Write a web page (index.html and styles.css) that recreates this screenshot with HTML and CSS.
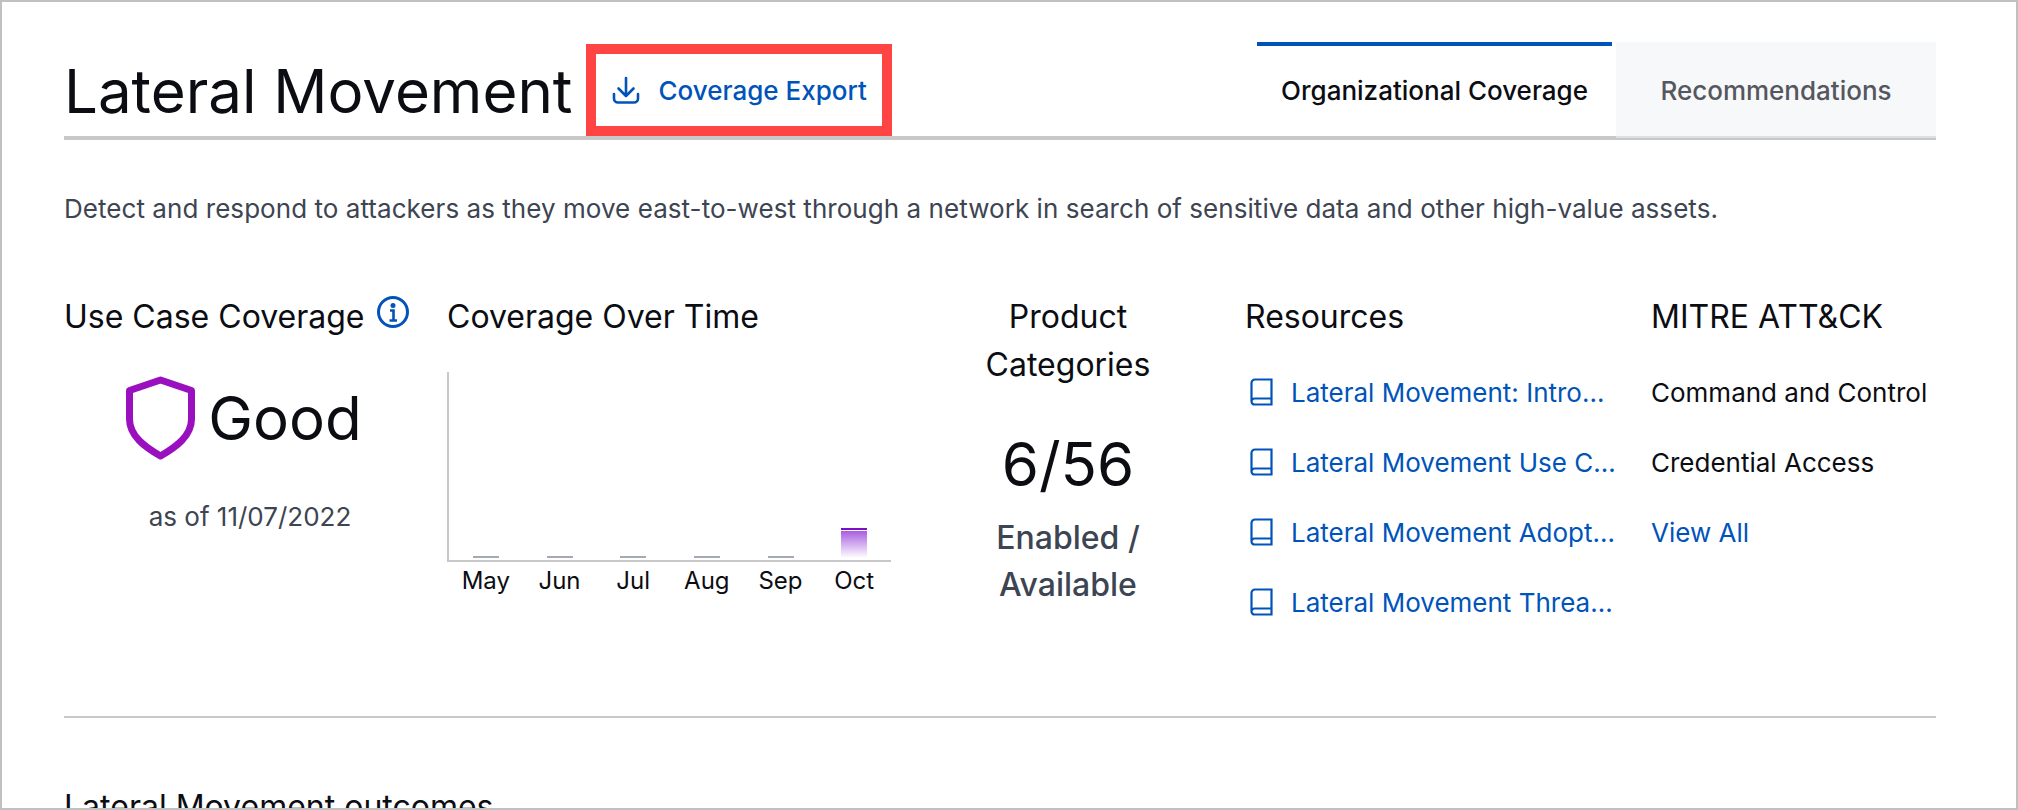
FILE: index.html
```html
<!DOCTYPE html>
<html>

<head>
  <title>Lateral Movement</title>
  <link rel="stylesheet" href="styles.css">
</head>

<body>
  <div class="frame">
    <header class="page-header">
      <h1>Lateral Movement</h1>
      <a class="export" href="#">
        <svg class="export-icon" viewBox="0 0 28 28" fill="none" stroke="currentColor" stroke-width="2.6" stroke-linecap="round" stroke-linejoin="round">
          <path d="M14 2v18M6.500 12.500 14 20l7.500-7.500" />
          <path d="M2 18v4.500a4 4 0 0 0 4 4h16a4 4 0 0 0 4-4V18" />
        </svg>
        Coverage Export
      </a>
      <nav class="tabs">
        <a class="tab tab-active" href="#">Organizational Coverage</a>
        <a class="tab" href="#">Recommendations</a>
      </nav>
    </header>

    <p class="summary">Detect and respond to attackers as they move east-to-west through a network in search of sensitive data and other high-value assets.</p>

    <section class="stats">
      <div class="coverage">
        <h2 class="heading">Use Case Coverage
          <svg class="info-icon" viewBox="0 0 34 34" fill="none" stroke="currentColor" stroke-width="3">
            <circle cx="17" cy="17" r="14.500" />
            <path d="M14 15.500h3.500v10M13.500 25.500h7.500" stroke-width="2.600" />
            <circle cx="17" cy="10.500" r="1" fill="currentColor" />
          </svg>
        </h2>
        <div class="status">
          <svg class="shield" viewBox="0 0 70 84" fill="none" stroke="#9a0fbe" stroke-width="7" stroke-linejoin="round">
            <path d="M34.5 4 65.500 14.500V43C65.500 60 50 71 34.500 80 19 71 3.500 60 3.500 43V14.500Z" />
          </svg>
          <span>Good</span>
        </div>
        <div class="as-of">as of 11/07/2022</div>
      </div>

      <div class="over-time">
        <h2 class="heading">Coverage Over Time</h2>
        <div class="chart">
          <div class="bar-slot"><div class="bar"></div></div>
          <div class="bar-slot"><div class="bar"></div></div>
          <div class="bar-slot"><div class="bar"></div></div>
          <div class="bar-slot"><div class="bar"></div></div>
          <div class="bar-slot"><div class="bar"></div></div>
          <div class="bar-slot"><div class="bar bar-good"><div class="bar-fill"></div></div></div>
        </div>
        <div class="months">
          <span>May</span><span>Jun</span><span>Jul</span><span>Aug</span><span>Sep</span><span>Oct</span>
        </div>
      </div>

      <div class="products">
        <h2 class="heading">Product Categories</h2>
        <div class="count">6/56</div>
        <div class="count-label">Enabled / Available</div>
      </div>

      <div class="resources">
        <h2 class="heading">Resources</h2>
        <ul class="link-list">
          <li><svg class="book" viewBox="0 0 23 28" fill="none" stroke="currentColor" stroke-width="2.2"><path d="M21.500 1.500H5A3.500 3.500 0 0 0 1.500 5v18.500A3 3 0 0 0 4.500 26.500h17ZM1.500 23.500a3 3 0 0 1 3-3h17" /></svg><a href="#">Lateral Movement: Intro...</a></li>
          <li><svg class="book" viewBox="0 0 23 28" fill="none" stroke="currentColor" stroke-width="2.2"><path d="M21.500 1.500H5A3.500 3.500 0 0 0 1.500 5v18.500A3 3 0 0 0 4.500 26.500h17ZM1.500 23.500a3 3 0 0 1 3-3h17" /></svg><a href="#">Lateral Movement Use C...</a></li>
          <li><svg class="book" viewBox="0 0 23 28" fill="none" stroke="currentColor" stroke-width="2.2"><path d="M21.500 1.500H5A3.500 3.500 0 0 0 1.500 5v18.500A3 3 0 0 0 4.500 26.500h17ZM1.500 23.500a3 3 0 0 1 3-3h17" /></svg><a href="#">Lateral Movement Adopt...</a></li>
          <li><svg class="book" viewBox="0 0 23 28" fill="none" stroke="currentColor" stroke-width="2.2"><path d="M21.500 1.500H5A3.500 3.500 0 0 0 1.500 5v18.500A3 3 0 0 0 4.500 26.500h17ZM1.500 23.500a3 3 0 0 1 3-3h17" /></svg><a href="#">Lateral Movement Threa...</a></li>
        </ul>
      </div>

      <div class="mitre">
        <h2 class="heading">MITRE ATT&amp;CK</h2>
        <ul class="link-list">
          <li>Command and Control</li>
          <li>Credential Access</li>
          <li><a href="#">View All</a></li>
        </ul>
      </div>
    </section>

    <hr class="divider">

    <h2 class="outcomes">Lateral Movement outcomes</h2>
  </div>
</body>

</html>
```

FILE: styles.css
```css
* {
  box-sizing: border-box;
}

body {
  margin: 0;
  font-family: Inter, "Noto Sans", sans-serif;
  color: #0b0d13;
  background: #ffffff;
}

a {
  color: #0054b9;
  text-decoration: none;
}

.frame {
  height: 810px;
  padding: 40px 80px 0 62px;
  border: 2px solid #c0c0c0;
  overflow: hidden;
}

.page-header {
  display: flex;
  align-items: flex-end;
  height: 98px;
  border-bottom: 4px solid #c8c8c8;
}

h1 {
  margin: 0 0 9px;
  font-size: 60px;
  font-weight: 400;
  line-height: 72px;
}

.export {
  display: flex;
  align-items: center;
  gap: 18px;
  width: 306px;
  height: 92px;
  margin-left: 14px;
  padding: 0 16px;
  border: 10px solid #ff4444;
  font-size: 26px;
  font-weight: 500;
  white-space: nowrap;
}

.export-icon {
  width: 28px;
  height: 28px;
  flex: none;
}

.tabs {
  display: flex;
  gap: 4px;
  margin-left: auto;
  margin-bottom: -2px;
  align-self: stretch;
}

.tab {
  display: flex;
  align-items: center;
  justify-content: center;
  width: 320px;
  padding-top: 2px;
  background: #f7f8fa;
  border-bottom: 2px solid #dedfe2;
  color: #55575e;
  font-size: 26px;
  font-weight: 500;
}

.tab-active {
  width: 355px;
  margin-bottom: 2px;
  padding-top: 0;
  padding-bottom: 2px;
  background: #ffffff;
  border-top: 4px solid #0054b9;
  border-bottom: 0;
  color: #0b0d13;
}

.summary {
  margin: 53px 0 0;
  color: #3d4452;
  font-size: 26px;
  letter-spacing: 0.05px;
  line-height: 32px;
}

.stats {
  display: flex;
  margin-top: 68px;
  height: 423px;
}

.heading {
  margin: 0;
  font-size: 32px;
  font-weight: 400;
  line-height: 48px;
}

.coverage {
  width: 383px;
}

.coverage .heading {
  display: flex;
  align-items: center;
  gap: 11px;
}

.info-icon {
  width: 34px;
  height: 34px;
  color: #0054b9;
  margin-top: -10px;
}

.status {
  display: flex;
  align-items: center;
  justify-content: center;
  gap: 12px;
  width: 360px;
  margin-top: 35px;
  font-size: 60px;
  line-height: 84px;
}

.shield {
  width: 70px;
  height: 84px;
}

.as-of {
  width: 372px;
  margin-top: 41px;
  color: #3d4452;
  font-size: 26px;
  line-height: 32px;
  text-align: center;
}

.over-time {
  width: 491px;
}

.chart {
  display: flex;
  width: 444px;
  height: 190px;
  margin-top: 31px;
  border-left: 2px solid #c8c8c8;
  border-bottom: 2px solid #c8c8c8;
}

.bar-slot {
  display: flex;
  flex: 1;
  align-items: flex-end;
  justify-content: center;
  padding-bottom: 2px;
}

.bar {
  width: 26px;
  height: 2px;
  background: #a5a9b4;
}

.bar-good {
  height: 30px;
  padding-top: 1px;
  background: #ffffff;
  border-top: 2px solid #7a10c8;
}

.bar-fill {
  height: 100%;
  background: linear-gradient(#a95fe0, #ffffff);
}

.months {
  display: flex;
  width: 444px;
  padding-left: 2px;
  margin-top: 3px;
  font-size: 24px;
  line-height: 32px;
}

.months span {
  flex: 1;
  text-align: center;
}

.products {
  width: 260px;
  text-align: center;
}

.count {
  margin-top: 39px;
  font-size: 60px;
  line-height: 72px;
}

.count-label {
  width: 170px;
  margin: 14px auto 0;
  color: #3d4452;
  font-size: 32px;
  font-weight: 500;
  line-height: 47px;
}

.resources {
  width: 406px;
  margin-left: 47px;
}

.link-list {
  margin: 16px 0 0;
  padding: 0;
  list-style: none;
  font-size: 26px;
}

.link-list li {
  display: flex;
  align-items: center;
  gap: 19px;
  height: 70px;
  white-space: nowrap;
}

.book {
  width: 23px;
  height: 28px;
  margin-left: 5px;
  margin-right: -1px;
  color: #0054b9;
  flex: none;
}

.divider {
  height: 2px;
  margin: 0;
  background: #c8c8c8;
  border: 0;
}

.outcomes {
  margin: 71px 0 0;
  font-size: 32px;
  font-weight: 400;
  line-height: 36px;
}
```
